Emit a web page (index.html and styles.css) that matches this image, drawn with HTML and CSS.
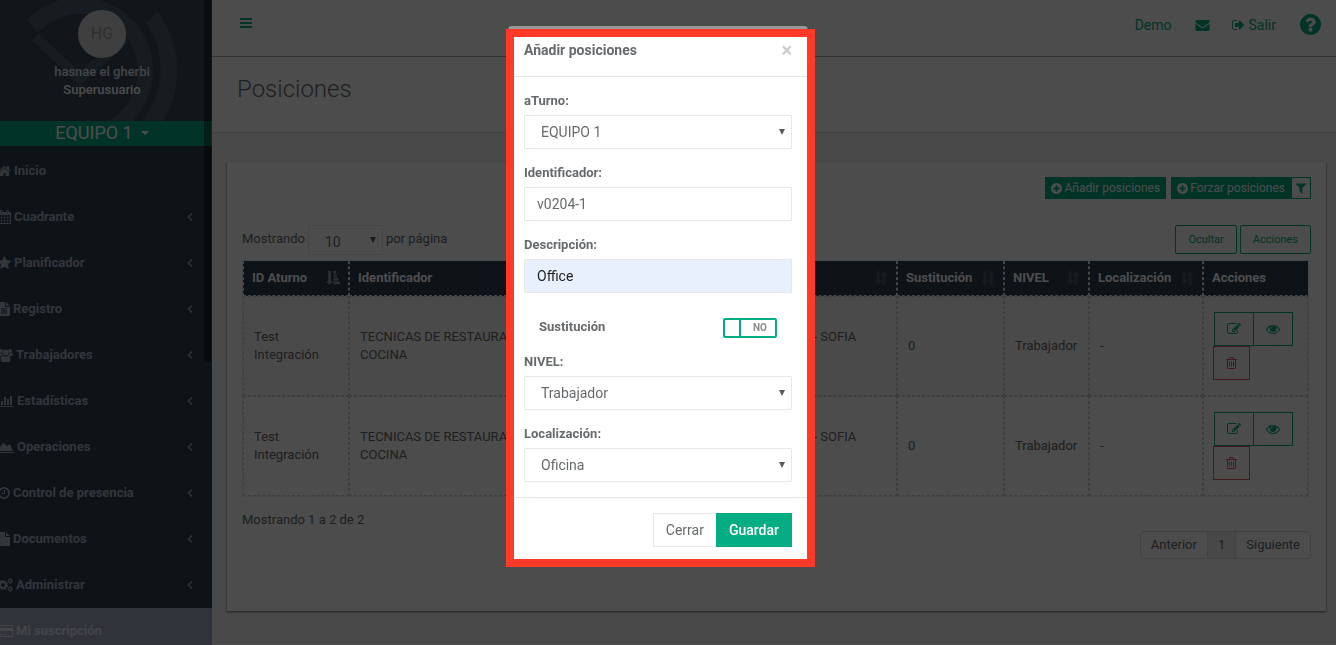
FILE: index.html
```
<!DOCTYPE html>
<html lang="es">
<head>
    <meta charset="UTF-8">
    <meta name="viewport" content="width=device-width, initial-scale=1.0">
    <title>Posiciones</title>
    <link rel="stylesheet" href="styles.css">
</head>
<body class="modal-open">
    <svg class="sprite" aria-hidden="true">
        <symbol id="home" viewBox="64 0 1664 1792"><path d="M1472 992v480q0 26-19 45t-45 19h-384v-384h-256v384h-384q-26 0-45-19t-19-45v-480q0-1 .5-3t.5-3l575-474 575 474q1 2 1 6zm223-69l-62 74q-8 9-21 11h-3q-13 0-21-7l-692-577-692 577q-12 8-24 7-13-2-21-11l-62-74q-8-10-7-23.5t11-21.5l719-599q32-26 76-26t76 26l244 204v-195q0-14 9-23t23-9h192q14 0 23 9t9 23v408l219 182q10 8 11 21.5t-7 23.5z"/></symbol>
        <symbol id="calendar" viewBox="0 0 13 14"><path fill-rule="evenodd" d="M1 2h1V1q0-1 1-1h.500q1 0 1 1v1h4V1q0-1 1-1H10q1 0 1 1v1h1q1 0 1 1v10q0 1-1 1H1q-1 0-1-1V3q0-1 1-1zM1 5v2h2.200V5zm2.700 0v2h2.500V5zm3 0v2h2.500V5zm3 0v2H12V5zM1 7.500V10h2.200V7.500zm2.700 0V10h2.500V7.500zm3 0V10h2.500V7.500zm3 0V10H12V7.500zM1 10.500V13h2.200v-2.500zm2.700 0V13h2.500v-2.500zm3 0V13h2.500v-2.500zm3 0V13H12v-2.500zM3 1v2.500h.500V1zm6.500 0v2.500h.500V1z"/></symbol>
        <symbol id="star" viewBox="64 0 1664 1792"><path d="M1728 647q0 22-26 48l-363 354 86 500q1 7 1 20 0 21-10.500 35.500t-30.500 14.500q-19 0-40-12l-449-236-449 236q-22 12-40 12-21 0-31.500-14.500t-10.500-35.500q0-6 2-20l86-500-364-354q-25-27-25-48 0-37 56-46l502-73 225-455q19-41 49-41t49 41l225 455 502 73q56 9 56 46z"/></symbol>
        <symbol id="file-text" viewBox="0 0 12 14"><path fill-rule="evenodd" d="M.8 0H7v4.200q0 .8.800.800H12v8.200q0 .8-.8.800H.8q-.8 0-.8-.8V.8Q0 0 .8 0zM8 0l4 4H8zM3 6.500v1h6v-1zm0 2v1h6v-1zm0 2v1h6v-1z"/></symbol>
        <symbol id="file" viewBox="0 0 12 14"><path d="M.8 0H7v4.200q0 .8.800.800H12v8.200q0 .8-.8.800H.8q-.8 0-.8-.8V.8Q0 0 .8 0zM8 0l4 4H8z"/></symbol>
        <symbol id="users" viewBox="0 0 15 14"><circle cx="3" cy="3" r="2"/><circle cx="12" cy="3" r="2"/><circle cx="7.500" cy="4.500" r="3"/><path d="M1.500 5Q3 6 4 5.300q0 1.200.8 1.900Q3.500 7.200 2.800 8H1.300Q0 8 0 6.800 0 4.500 1.500 5zM13.500 5Q12 6 11 5.300q0 1.200-.8 1.900 1.300 0 2 .8h1.500Q15 8 15 6.800 15 4.500 13.500 5zM4.800 7.500q2.700 2 5.400 0Q12.500 7.500 12.500 12q0 2-2 2h-6q-2 0-2-2 0-4.500 2.300-4.500z"/></symbol>
        <symbol id="bar-chart" viewBox="0 0 16 14"><path d="M0 1h1v11h15v1H0zM3 7h2v4H3zm3-4h2v8H6zm3 2h2v6H9zm3-3h2v9h-2z"/></symbol>
        <symbol id="area-chart" viewBox="0 0 16 14"><path d="M0 1h1v11h15v1H0zM2 11V7l3.500-4.500L9 6l3-2 3 7z"/></symbol>
        <symbol id="clock" viewBox="0 0 12 14"><path fill-rule="evenodd" d="M6 1a6 6 0 1 1 0 12A6 6 0 0 1 6 1zm0 1.700a4.300 4.300 0 1 0 0 8.600 4.300 4.300 0 0 0 0-8.600zM6 4h1v4H3.500V7H6z"/></symbol>
        <symbol id="cogs" viewBox="0 0 15 14"><g fill="none" stroke="currentColor"><circle cx="5" cy="7" r="3" stroke-width="2"/><circle cx="5" cy="7" r="4.500" stroke-width="1.200" stroke-dasharray="1.800 1.734"/><circle cx="12.200" cy="3" r="1.600" stroke-width="1.200"/><circle cx="12.200" cy="3" r="2.400" stroke-width=".8" stroke-dasharray="1 .885"/><circle cx="12.200" cy="11" r="1.600" stroke-width="1.200"/><circle cx="12.200" cy="11" r="2.400" stroke-width=".8" stroke-dasharray="1 .885"/></g></symbol>
        <symbol id="card" viewBox="0 0 15 14"><path fill-rule="evenodd" d="M1.200 1h12.600Q15 1 15 2.200v9.600q0 1.200-1.200 1.200H1.200Q0 13 0 11.800V2.200Q0 1 1.200 1zM1 2v2h13V2zm0 5v5h13V7zm1 3h2v1H2zm3 0h3v1H5z"/></symbol>
        <symbol id="angle-left" viewBox="0 0 6 10"><path d="M5 1.500L1.500 5 5 8.500" fill="none" stroke="currentColor" stroke-width="1.300"/></symbol>
        <symbol id="bars" viewBox="0 0 12 14"><path d="M0 2h12v2H0zm0 4h12v2H0zm0 4h12v2H0z"/></symbol>
        <symbol id="envelope" viewBox="0 0 1792 1792"><path d="M1792 710v794q0 66-47 113t-113 47h-1472q-66 0-113-47t-47-113v-794q44 49 101 87 362 246 497 345 57 42 92.500 65.500t94.500 48 110 24.500h2q51 0 110-24.500t94.500-48 92.500-65.500q170-123 498-345 57-39 100-87zm0-294q0 79-49 151t-122 123q-376 261-468 325-10 7-42.500 31t-54 38.500-52 32.500-57.500 27-50 9h-2q-23 0-50-9t-57.500-27-52-32.500-54-38.500-42.500-31q-91-64-262-182.500t-205-142.500q-62-42-117-115.500t-55-136.500q0-78 41.500-130t118.500-52h1472q65 0 112.500 47t47.500 113z"/></symbol>
        <symbol id="sign-out" viewBox="64 0 1664 1792"><path d="M704 1440q0 4 1 20t.5 26.500-3 23.500-10 19.500-20.500 6.500h-320q-119 0-203.500-84.500t-84.500-203.500v-704q0-119 84.500-203.500t203.500-84.500h320q13 0 22.500 9.500t9.500 22.500q0 4 1 20t.5 26.500-3 23.500-10 19.500-20.500 6.500h-320q-66 0-113 47t-47 113v704q0 66 47 113t113 47h312l11.500 1 11.500 3 8 5.500 7 9 2 13.500zm928-544q0 26-19 45l-544 544q-19 19-45 19t-45-19-19-45v-288h-448q-26 0-45-19t-19-45v-384q0-26 19-45t45-19h448v-288q0-26 19-45t45-19 45 19l544 544q19 19 19 45z"/></symbol>
        <symbol id="question" viewBox="128 128 1536 1536"><path d="M1024 1376v-192q0-14-9-23t-23-9h-192q-14 0-23 9t-9 23v192q0 14 9 23t23 9h192q14 0 23-9t9-23zm256-672q0-88-55.500-163t-138.500-116-170-41q-243 0-371 213-15 24 8 42l132 100q7 6 19 6 16 0 25-12 53-68 86-92 34-24 86-24 48 0 85.500 26t37.500 59q0 38-20 61t-68 45q-63 28-115.500 86.500t-52.500 125.500v36q0 14 9 23t23 9h192q14 0 23-9t9-23q0-19 21.500-49.500t54.500-49.500q32-18 49-28.500t46-35 44.500-48 28-60.500 12.500-81zm384 192q0 209-103 385.500t-279.500 279.500-385.500 103-385.500-103-279.500-279.500-103-385.500 103-385.500 279.500-279.500 385.500-103 385.500 103 279.500 279.500 103 385.500z"/></symbol>
        <symbol id="plus" viewBox="128 128 1536 1536"><path d="M1344 960v-128q0-26-19-45t-45-19h-256v-256q0-26-19-45t-45-19h-128q-26 0-45 19t-19 45v256h-256q-26 0-45 19t-19 45v128q0 26 19 45t45 19h256v256q0 26 19 45t45 19h128q26 0 45-19t19-45v-256h256q26 0 45-19t19-45zm320-64q0 209-103 385.500t-279.500 279.500-385.500 103-385.500-103-279.500-279.500-103-385.500 103-385.500 279.500-279.500 385.500-103 385.500 103 279.500 279.500 103 385.500z"/></symbol>
        <symbol id="filter" viewBox="192 192 1408 1536"><path d="M1595 295q17 41-14 70l-493 493v742q0 42-39 59-13 5-25 5-27 0-45-19l-256-256q-19-19-19-45v-486l-493-493q-31-29-14-70 17-39 59-39h1280q42 0 59 39z"/></symbol>
        <symbol id="sort" viewBox="0 0 14 14"><path d="M2.500 0h3v9.500H8L4 14 0 9.500h2.500zM8.500 14h3V4.500H14L10 0 6 4.500h2.500z"/></symbol>
        <symbol id="sort-asc" viewBox="0 0 14 14"><path d="M2 0h3v10h2L3.500 14 0 10h2zM7.500 0H10v2.800H7.500zm0 3.500H11v2.800H7.500zm0 3.500h5v2.800h-5zm0 3.500H14v2.800H7.500z"/></symbol>
        <symbol id="edit" viewBox="0 0 1792 1792"><path d="M888 1184l116-116-152-152-116 116v56h96v96h56zm440-720q-16-16-33 1l-350 350q-17 17-1 33t33-1l350-350q17-17 1-33zm80 594v190q0 119-84.500 203.500t-203.500 84.500h-832q-119 0-203.500-84.500t-84.500-203.500v-832q0-119 84.500-203.500t203.500-84.500h832q63 0 117 25 15 7 18 23 3 17-9 29l-49 49q-14 14-32 8-23-6-45-6h-832q-66 0-113 47t-47 113v832q0 66 47 113t113 47h832q66 0 113-47t47-113v-126q0-13 9-22l64-64q15-15 35-7t20 29zm-96-738l288 288-672 672h-288v-288zm444 132l-92 92-288-288 92-92q28-28 68-28t68 28l152 152q28 28 28 68t-28 68z"/></symbol>
        <symbol id="eye" viewBox="0 0 1792 1792"><path d="M1664 960q-152-236-381-353 61 104 61 225 0 185-131.500 316.500t-316.500 131.500-316.500-131.500-131.500-316.500q0-121 61-225-229 117-381 353 133 205 333.500 326.500t434.500 121.500 434.500-121.500 333.500-326.500zm-720-384q0-20-14-34t-34-14q-125 0-214.500 89.500t-89.500 214.500q0 20 14 34t34 14 34-14 14-34q0-86 61-147t147-61q20 0 34-14t14-34zm848 384q0 34-20 69-140 230-376.500 368.500t-499.500 138.500-499.500-139-376.500-368q-20-35-20-69t20-69q140-229 376.500-368t499.500-139 499.500 139 376.500 368q20 35 20 69z"/></symbol>
        <symbol id="trash" viewBox="192 0 1408 1792"><path d="M704 736v576q0 14-9 23t-23 9h-64q-14 0-23-9t-9-23v-576q0-14 9-23t23-9h64q14 0 23 9t9 23zm256 0v576q0 14-9 23t-23 9h-64q-14 0-23-9t-9-23v-576q0-14 9-23t23-9h64q14 0 23 9t9 23zm256 0v576q0 14-9 23t-23 9h-64q-14 0-23-9t-9-23v-576q0-14 9-23t23-9h64q14 0 23 9t9 23zm128 724v-948h-896v948q0 22 7 40.500t14.500 27 10.500 8.500h832q3 0 10.500-8.500t14.500-27 7-40.500zm-672-1076h448l-48-117q-7-9-17-11h-317q-10 2-17 11zm928 32v64q0 14-9 23t-23 9h-96v948q0 83-47 143.500t-113 60.500h-832q-66 0-113-58.500t-47-141.500v-952h-96q-14 0-23-9t-9-23v-64q0-14 9-23t23-9h309l70-167q15-37 54-63t79-26h320q40 0 79 26t54 63l70 167h309q14 0 23 9t9 23z"/></symbol>
    </svg>

    <div class="wrapper">
        <nav class="sidebar">
            <div class="profile">
                <svg class="profile-pattern" viewBox="0 0 212 121" aria-hidden="true">
                    <path d="M27 20A73 73 0 1 1 48 136L56 122A57 57 0 1 0 38 33z"/>
                    <path d="M158 12A98 98 0 0 1 150 138L136 127A80 80 0 0 0 146 23z"/>
                    <path d="M38 33L80 72 122 32 128 42 80 86 33 41z"/>
                </svg>
                <div class="avatar">HG</div>
                <div class="profile-name">hasnae el gherbi</div>
                <div class="profile-name role">Superusuario</div>
            </div>
            <button type="button" class="team">EQUIPO 1 <span class="caret"></span></button>
            <ul class="menu">
                <li><a href="#"><svg class="icon w13"><use href="#home"/></svg>Inicio</a></li>
                <li><a href="#"><svg class="icon w13"><use href="#calendar"/></svg>Cuadrante<svg class="arrow"><use href="#angle-left"/></svg></a></li>
                <li><a href="#"><svg class="icon w13"><use href="#star"/></svg>Planificador<svg class="arrow"><use href="#angle-left"/></svg></a></li>
                <li><a href="#"><svg class="icon w12"><use href="#file-text"/></svg>Registro<svg class="arrow"><use href="#angle-left"/></svg></a></li>
                <li><a href="#"><svg class="icon w15"><use href="#users"/></svg>Trabajadores<svg class="arrow"><use href="#angle-left"/></svg></a></li>
                <li><a href="#"><svg class="icon w16"><use href="#bar-chart"/></svg>Estadísticas<svg class="arrow"><use href="#angle-left"/></svg></a></li>
                <li><a href="#"><svg class="icon w16"><use href="#area-chart"/></svg>Operaciones<svg class="arrow"><use href="#angle-left"/></svg></a></li>
                <li><a href="#"><svg class="icon w12"><use href="#clock"/></svg>Control de presencia<svg class="arrow"><use href="#angle-left"/></svg></a></li>
                <li><a href="#"><svg class="icon w12"><use href="#file"/></svg>Documentos<svg class="arrow"><use href="#angle-left"/></svg></a></li>
                <li><a href="#"><svg class="icon w15"><use href="#cogs"/></svg>Administrar<svg class="arrow"><use href="#angle-left"/></svg></a></li>
                <li class="special"><a href="#"><svg class="icon w15"><use href="#card"/></svg>Mi suscripción</a></li>
            </ul>
            <div class="scrollbar"></div>
        </nav>

        <main class="page">
            <header class="topbar">
                <a href="#" class="toggle-menu" aria-label="Menú"><svg class="icon w12"><use href="#bars"/></svg></a>
                <a href="#" class="top-demo">Demo</a>
                <a href="#" class="top-mail" aria-label="Mensajes"><svg class="icon w15"><use href="#envelope"/></svg></a>
                <a href="#" class="top-exit"><svg class="icon w13"><use href="#sign-out"/></svg>Salir</a>
                <a href="#" class="top-help" aria-label="Ayuda"><svg><use href="#question"/></svg></a>
            </header>
            <div class="page-heading">
                <h1>Posiciones</h1>
            </div>

            <section class="panel">
                <div class="toolbar">
                    <button type="button" class="btn-xs"><svg><use href="#plus"/></svg>Añadir posiciones</button>
                    <div class="btn-pair">
                        <button type="button" class="btn-xs"><svg><use href="#plus"/></svg>Forzar posiciones</button>
                        <button type="button" class="btn-xs outline" aria-label="Filtrar"><svg><use href="#filter"/></svg></button>
                    </div>
                </div>

                <div class="controls">
                    <label for="length">Mostrando</label>
                    <div class="select-box small">
                        <select id="length"><option>10</option></select>
                    </div>
                    <span>por página</span>
                    <div class="control-buttons">
                        <button type="button" class="btn-outline">Ocultar</button>
                        <button type="button" class="btn-outline">Acciones</button>
                    </div>
                </div>

                <table class="positions">
                    <thead>
                        <tr>
                            <th class="col-id"><div>ID Aturno<svg class="active"><use href="#sort-asc"/></svg></div></th>
                            <th><div>Identificador<svg><use href="#sort"/></svg></div></th>
                            <th class="col-desc"><div>Descripción<svg><use href="#sort"/></svg></div></th>
                            <th class="col-sust"><div>Sustitución<svg><use href="#sort"/></svg></div></th>
                            <th class="col-level"><div>NIVEL<svg><use href="#sort"/></svg></div></th>
                            <th class="col-loc"><div>Localización<svg><use href="#sort"/></svg></div></th>
                            <th class="col-actions"><div>Acciones</div></th>
                        </tr>
                    </thead>
                    <tbody>
                        <tr>
                            <td>Test Integración</td>
                            <td>TECNICAS DE RESTAURACION<br>COCINA</td>
                            <td>TECNICAS DE RESTAURACION - SOFIA<br>COCINA</td>
                            <td>0</td>
                            <td>Trabajador</td>
                            <td>-</td>
                            <td class="actions">
                                <div class="action-group">
                                    <button type="button" aria-label="Editar"><svg><use href="#edit"/></svg></button>
                                    <button type="button" aria-label="Ver"><svg><use href="#eye"/></svg></button>
                                </div>
                                <button type="button" class="danger" aria-label="Eliminar"><svg><use href="#trash"/></svg></button>
                            </td>
                        </tr>
                        <tr>
                            <td>Test Integración</td>
                            <td>TECNICAS DE RESTAURACION<br>COCINA</td>
                            <td>TECNICAS DE RESTAURACION - SOFIA<br>COCINA</td>
                            <td>0</td>
                            <td>Trabajador</td>
                            <td>-</td>
                            <td class="actions">
                                <div class="action-group">
                                    <button type="button" aria-label="Editar"><svg><use href="#edit"/></svg></button>
                                    <button type="button" aria-label="Ver"><svg><use href="#eye"/></svg></button>
                                </div>
                                <button type="button" class="danger" aria-label="Eliminar"><svg><use href="#trash"/></svg></button>
                            </td>
                        </tr>
                    </tbody>
                </table>

                <p class="info">Mostrando 1 a 2 de 2</p>
                <div class="pagination">
                    <a href="#">Anterior</a>
                    <a href="#" class="current">1</a>
                    <a href="#">Siguiente</a>
                </div>
            </section>
            <footer class="footer"></footer>
        </main>
    </div>

    <div class="backdrop">
        <div class="modal" role="dialog" aria-labelledby="modalTitle">
            <div class="modal-header">
                <h2 id="modalTitle">Añadir posiciones</h2>
                <button type="button" class="close" aria-label="Cerrar ventana">×</button>
            </div>
            <form id="positionForm" class="modal-body">
                <div class="form-group">
                    <label for="turno">aTurno:</label>
                    <div class="select-box">
                        <select id="turno"><option>EQUIPO 1</option></select>
                    </div>
                </div>
                <div class="form-group">
                    <label for="identificador">Identificador:</label>
                    <input type="text" id="identificador" value="v0204-1">
                </div>
                <div class="form-group">
                    <label for="descripcion">Descripción:</label>
                    <input type="text" id="descripcion" class="autofilled" value="Office">
                </div>
                <div class="switch-row">
                    <label for="sustitucion">Sustitución</label>
                    <div class="switch">
                        <input type="checkbox" id="sustitucion">
                        <span>NO</span>
                    </div>
                </div>
                <div class="form-group">
                    <label for="nivel">NIVEL:</label>
                    <div class="select-box">
                        <select id="nivel"><option>Trabajador</option></select>
                    </div>
                </div>
                <div class="form-group">
                    <label for="localizacion">Localización:</label>
                    <div class="select-box">
                        <select id="localizacion"><option>Oficina</option></select>
                    </div>
                </div>
            </form>
            <div class="modal-footer">
                <button type="button" class="btn">Cerrar</button>
                <button type="submit" form="positionForm" class="btn primary">Guardar</button>
            </div>
            <div class="highlight"></div>
        </div>
    </div>
</body>
</html>
```
FILE: styles.css
```
* {
    margin: 0;
    padding: 0;
    box-sizing: border-box;
}

body {
    font-family: Roboto, "Liberation Sans", sans-serif;
    font-size: 13px;
    line-height: 18px;
    color: #676a6c;
    background: #f3f3f4;
}

body.modal-open {
    overflow: hidden;
}

button, input, select {
    font: inherit;
    color: inherit;
}

button {
    cursor: pointer;
}

a {
    color: inherit;
    text-decoration: none;
}

svg {
    fill: currentColor;
}

.sprite {
    display: none;
}

.icon {
    height: 14px;
    flex: none;
}

.w12 { width: 12px; }
.w13 { width: 13px; }
.w15 { width: 15px; }
.w16 { width: 16px; }

.wrapper {
    display: flex;
    height: 100vh;
    overflow: hidden;
}

/* Sidebar */

.sidebar {
    position: relative;
    width: 212px;
    flex: none;
    height: 100%;
    overflow: hidden;
    background: #2f4050;
    color: #a7b1c2;
}

.profile {
    position: relative;
    height: 121px;
    padding: 10px 8px 0 0;
    text-align: center;
    background: #3c4a58;
    overflow: hidden;
}

.profile-pattern {
    position: absolute;
    top: 0;
    left: 0;
    width: 212px;
    height: 121px;
    color: #4c5f6a;
}

.avatar {
    position: relative;
    width: 48px;
    margin: 0 auto 5px;
    border-radius: 50%;
    background: #d3d3d3;
    color: #a0a0a0;
    font-size: 16px;
    line-height: 48px;
}

.profile-name {
    position: relative;
    font-weight: 500;
    color: #dfe4ed;
}

.profile-name.role {
    color: #fff;
}

.team {
    display: flex;
    align-items: center;
    justify-content: center;
    gap: 8px;
    width: 100%;
    height: 25px;
    padding: 0 8px 2px 0;
    margin-bottom: 2px;
    border: 0;
    background: #04ae82;
    color: #fff;
    font-size: 18px;
}

.caret {
    border: 4px solid transparent;
    border-top-color: currentColor;
    border-bottom: 0;
}

.menu {
    list-style: none;
}

.menu a {
    display: flex;
    align-items: center;
    gap: 3px;
    height: 46px;
    margin-left: -2px;
    padding-right: 19px;
    font-weight: 700;
}

.menu .arrow {
    width: 6px;
    height: 10px;
    margin-left: auto;
}

.menu .special {
    background: #a0adc4;
    color: #dfe4ed;
}

.scrollbar {
    position: absolute;
    top: 0;
    right: 1px;
    width: 7px;
    height: 362px;
    border-radius: 0 0 4px 4px;
    background: rgba(0, 0, 0, 0.4);
}

/* Page */

.page {
    flex: 1;
    min-width: 0;
    display: flex;
    flex-direction: column;
}

.topbar {
    display: flex;
    align-items: center;
    height: 57px;
    flex: none;
    padding: 0 15px 7px 28px;
    background: #fff;
    border-bottom: 1px solid #a8a8a8;
    color: #04ae82;
    font-size: 14px;
}

.topbar a {
    display: flex;
    align-items: center;
    gap: 4px;
}

.toggle-menu {
    margin-right: auto;
    padding-bottom: 4px;
}

.top-mail {
    margin: 0 22px 0 23px;
}

.top-help {
    margin-left: 24px;
}

.top-help svg {
    width: 21px;
    height: 21px;
}

.page-heading {
    flex: none;
    height: 76px;
    padding: 20px 25px;
    background: #fff;
    border-bottom: 1px solid #d8d8d8;
}

.page-heading h1 {
    font-size: 24px;
    line-height: 24px;
    font-weight: 300;
}

.panel {
    flex: none;
    margin: 29px 10px 31px 15px;
    padding: 15px 15px 52px;
    background: #fff;
    box-shadow: 0 1px 2px rgba(0, 0, 0, 0.6);
}

.toolbar, .btn-pair {
    display: flex;
    justify-content: flex-end;
}

.toolbar {
    gap: 5px;
    margin-bottom: 26px;
}

.btn-xs {
    display: flex;
    align-items: center;
    gap: 2px;
    height: 22px;
    padding: 0 5px;
    border: 1px solid #04ae82;
    background: #04ae82;
    color: #fff;
    font-size: 12px;
}

.btn-xs svg {
    width: 11px;
    height: 11px;
}

.btn-xs.outline {
    padding: 0 4px;
    background: #fff;
    color: #04ae82;
}

.btn-xs.outline svg {
    width: 10px;
}

.controls {
    display: flex;
    align-items: flex-start;
    gap: 3px;
    margin-bottom: 5px;
    line-height: 28px;
}

.control-buttons {
    display: flex;
    gap: 3px;
    margin-left: auto;
}

.btn-outline {
    height: 29px;
    padding: 0 12px;
    border: 1px solid #04ae82;
    border-radius: 2px;
    background: #fff;
    color: #04ae82;
    font-size: 11px;
}

.select-box {
    position: relative;
}

.select-box select {
    display: block;
    width: 100%;
    height: 34px;
    padding: 0 16px;
    border: 1px solid #e5e6e7;
    border-radius: 1px;
    background: #fff;
    appearance: none;
    font-size: 14px;
}

.select-box::after {
    content: "";
    position: absolute;
    top: 50%;
    right: 7px;
    margin-top: -3px;
    border: 3px solid transparent;
    border-top: 6px solid #5a5c5e;
    border-bottom: 0;
}

.select-box.small {
    width: 75px;
}

.select-box.small select {
    height: 30px;
    padding-top: 2px;
}

/* Table */

.positions {
    width: calc(100% - 2px);
    table-layout: fixed;
    border: 1px solid #ebebeb;
    border-collapse: separate;
    border-spacing: 0;
}

.positions th, .positions td {
    border: 1px dashed #d0d0d0;
    text-align: left;
    vertical-align: middle;
}

.positions th {
    height: 35px;
    padding: 0 8px;
    border-top: 0;
    border-color: #e7eaec;
    background: #2f4050;
    color: #fff;
    font-weight: 700;
}

.positions th:last-child {
    border-right-color: #2f4050;
}

.positions th div {
    display: flex;
    align-items: center;
    justify-content: space-between;
}

.positions th svg {
    width: 14px;
    height: 14px;
    color: #4f5d6b;
}

.positions th svg.active {
    color: #8c97a2;
}

.positions td {
    height: 100px;
    padding: 0 10px;
}

.positions tbody tr:first-child {
    background: #f9f9f9;
}

.col-id { width: 106px; }
.col-desc { width: 275px; }
.col-sust { width: 107px; }
.col-level { width: 85px; }
.col-loc { width: 114px; }
.col-actions { width: 105px; }

.action-group {
    display: flex;
}

.actions button {
    display: flex;
    align-items: center;
    justify-content: center;
    width: 40px;
    height: 34px;
    border: 1px solid #04ae82;
    background: transparent;
    color: #04ae82;
}

.action-group button + button {
    margin-left: -1px;
}

.actions svg {
    width: 14px;
    height: 14px;
}

.actions .danger {
    width: 37px;
    margin-left: -1px;
    border-color: #ed5565;
    color: #ed5565;
}

.actions .danger svg {
    width: 11px;
}

.info {
    margin: 14px 0 2px;
}

.pagination {
    display: flex;
    justify-content: flex-end;
}

.pagination a {
    padding: 4px 10px;
    border: 1px solid #ddd;
    margin-left: -1px;
}

.pagination a:first-child {
    border-radius: 4px 0 0 4px;
}

.pagination a:last-child {
    border-radius: 0 4px 4px 0;
}

.pagination .current {
    background: #f0f0f0;
}

.footer {
    flex: 1 0 36px;
    background: #fff;
    border-top: 1px solid #e7eaec;
}

/* Modal */

.backdrop {
    position: fixed;
    inset: 0;
    display: flex;
    justify-content: center;
    align-items: flex-start;
    padding: 26px 20px 0 0;
    background: rgba(0, 0, 0, 0.7);
}

.modal {
    position: relative;
    width: 300px;
    border: 1px solid #777;
    border-top: 3px solid #999;
    border-radius: 4px;
    background: #fff;
}

/* Red frame that marks the dialog */
.highlight {
    position: absolute;
    inset: 0 -8px -5px -3px;
    border: 8px solid #ff3a28;
    pointer-events: none;
}

.modal-header {
    display: flex;
    justify-content: space-between;
    align-items: center;
    height: 48px;
    padding: 0 15px 6px;
    border-bottom: 1px solid #e5e5e5;
}

.modal-header h2 {
    font-size: 14px;
    font-weight: 700;
}

.close {
    border: 0;
    background: none;
    color: #ccc;
    font-size: 20px;
    font-weight: 700;
}

.modal-body {
    padding: 15px;
}

.form-group {
    margin-bottom: 15px;
}

.form-group:last-child {
    margin-bottom: 0;
}

.form-group label {
    display: block;
    margin-bottom: 5px;
    font-weight: 700;
}

.form-group input {
    display: block;
    width: 100%;
    height: 34px;
    padding: 0 12px;
    border: 1px solid #e5e6e7;
    border-radius: 1px;
    background: #fff;
    font-size: 14px;
}

.form-group .autofilled {
    background: #e8f0fe;
    color: #222;
}

.switch-row {
    display: flex;
    align-items: flex-start;
    justify-content: space-between;
    padding: 10px 15px 15px;
    font-weight: 700;
}

.switch {
    display: flex;
    align-items: center;
    width: 54px;
    height: 20px;
    border: 2px solid #04ae82;
    border-radius: 2px;
}

.switch input {
    width: 16px;
    height: 16px;
    border-right: 2px solid #04ae82;
    appearance: none;
}

.switch span {
    flex: 1;
    padding-left: 4px;
    text-align: center;
    font-size: 10px;
    color: #8a8c8e;
}

.modal-footer {
    display: flex;
    justify-content: flex-end;
    padding: 15px;
    border-top: 1px solid #e5e5e5;
}

.btn {
    height: 34px;
    padding: 0 12px;
    border: 1px solid #e7eaec;
    background: #fff;
    font-size: 14px;
}

.btn.primary {
    margin-left: -1px;
    border-color: #04ae82;
    background: #04ae82;
    color: #fff;
    font-weight: 500;
}
```
